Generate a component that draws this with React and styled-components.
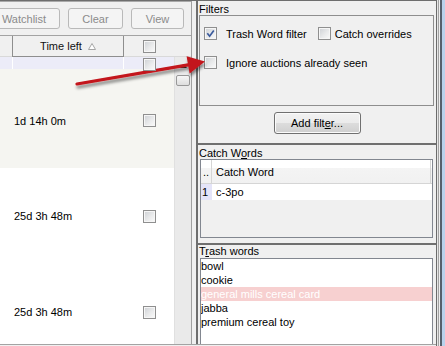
import React from "react";
import styled, { createGlobalStyle } from "styled-components";

const GlobalStyle = createGlobalStyle`
  html, body { margin: 0; padding: 0; background: #f0f0f0; overflow: hidden; }
  body { font-family: "Liberation Sans", Arial, sans-serif; font-size: 11px; color: #000; }
  * { box-sizing: border-box; }
`;

const Window = styled.div`
  position: relative;
  width: 445px;
  height: 346px;
  display: flex;
  align-items: flex-start;
  background: #f0f0f0;
  overflow: hidden;
`;

const Frame = styled.div`
  width: 436px;
  height: 345px;
  flex-shrink: 0;
  display: flex;
  flex-direction: column;
  border-top: 1px solid #6e6e6e;
  border-bottom: 1px solid #a3a3a3;
`;

const Main = styled.div`
  flex: 1;
  min-height: 0;
  display: flex;
`;

const WindowEdge = styled.div`
  width: 9px;
  height: 346px;
  flex-shrink: 0;
  background: linear-gradient(
    to right,
    #6b6b6b 0 1px,
    #e6e6e6 1px 2px,
    #a2a2a2 2px 3px,
    #eeeeee 3px 4px,
    #56606c 4px 6px,
    #b9d2ec 6px 9px
  );
`;

/* ---------- left pane ---------- */

const LeftPane = styled.div`
  width: 192px;
  flex-shrink: 0;
  display: flex;
  flex-direction: column;
  border-top: 1px solid #a9a9a9;
  border-right: 1px solid #a0a0a0;
  overflow: hidden;
`;

const Toolbar = styled.div`
  height: 34px;
  flex-shrink: 0;
  display: flex;
  justify-content: flex-end;
  align-items: flex-start;
  gap: 8px;
  padding: 6px 7px 0 0;
  border-bottom: 1px solid #a3a3a3;
  background: #f0f0f0;
`;

const ToolButton = styled.div`
  width: ${(p) => p.$w}px;
  height: 21px;
  flex-shrink: 0;
  display: flex;
  align-items: center;
  justify-content: center;
  border: 1px solid #b9b9b9;
  border-radius: 3px;
  background: #f4f4f4;
  color: #8b8b8b;
`;

const HeadRow = styled.div`
  height: 21px;
  flex-shrink: 0;
  display: flex;
  background: #f0f0f0;
`;

const HeadCell = styled.div`
  width: ${(p) => (p.$w ? `${p.$w}px` : "auto")};
  flex: ${(p) => (p.$w ? "0 0 auto" : "1")};
  display: flex;
  align-items: center;
  justify-content: center;
  gap: 6px;
  border-bottom: 1px solid ${(p) => (p.$sorted ? "#8e8e8e" : "#d9d9d9")};
  ${(p) =>
    p.$sorted &&
    "border-left: 1px solid #8e8e8e; border-right: 1px solid #8e8e8e; color: #111;"}
`;

const GridBody = styled.div`
  flex: 1;
  min-height: 0;
  display: flex;
`;

const RowsArea = styled.div`
  width: 174px;
  flex-shrink: 0;
  display: flex;
  flex-direction: column;
  background: #fff;
`;

const NewRow = styled.div`
  height: 12px;
  flex-shrink: 0;
  display: flex;
  background: #ececf8;
`;

const NewCell = styled.div`
  width: ${(p) => p.$w}px;
  flex-shrink: 0;
  display: flex;
  justify-content: center;
  padding-top: 1px;
  ${(p) => p.$sep && "border-right: 1px solid #ffffff;"}
`;

const DataRow = styled.div`
  height: ${(p) => p.$h}px;
  flex-shrink: 0;
  display: flex;
  align-items: center;
  padding-top: ${(p) => p.$pt || 0}px;
  background: ${(p) => p.$bg};
`;

const TextCell = styled.div`
  width: 124px;
  flex-shrink: 0;
  padding-left: 14px;
`;

const CheckCell = styled.div`
  width: 50px;
  flex-shrink: 0;
  display: flex;
  justify-content: center;
`;

const ScrollBar = styled.div`
  flex: 1;
  display: flex;
  flex-direction: column;
  background: #eaeaea;
  border-left: 1px solid #e0e0e0;
`;

const ScrollArrow = styled.div`
  height: 17px;
  display: flex;
  align-items: center;
  justify-content: center;
`;

const Thumb = styled.div`
  height: 11px;
  margin: 1px 1px 0 1px;
  border: 1px solid #989898;
  border-radius: 2px;
  background: linear-gradient(#f6f6f6, #dedede);
`;

/* ---------- splitter & right pane ---------- */

const Splitter = styled.div`
  width: 4px;
  flex-shrink: 0;
  background: #f0f0f0;
`;

const RightPane = styled.div`
  flex: 1;
  min-width: 0;
  display: flex;
  flex-direction: column;
  border-left: 2px solid #6e6e6e;
  background: #f0f0f0;
`;

const GroupLabel = styled.div`
  height: ${(p) => p.$h || 14}px;
  line-height: ${(p) => p.$h || 14}px;
  padding-top: ${(p) => p.$pt || 0}px;
  padding-left: 1px;
  flex-shrink: 0;
  white-space: nowrap;
`;

const FilterBox = styled.div`
  height: 91px;
  flex-shrink: 0;
  margin: 0 2px 0 1px;
  border: 1px solid #8e8e8e;
  display: flex;
  flex-direction: column;
  gap: 16px;
  padding: 11px 0 0 4px;
`;

const CheckRow = styled.div`
  height: 13px;
  display: flex;
  align-items: center;
  gap: 11px;
`;

const CheckItem = styled.label`
  display: flex;
  align-items: center;
  gap: ${(p) => p.$gap}px;
  white-space: nowrap;
`;

const Box = styled.span`
  width: 13px;
  height: 13px;
  flex-shrink: 0;
  display: inline-flex;
  align-items: center;
  justify-content: center;
  border: 1px solid #8f8f8f;
  background: linear-gradient(135deg, #cdd0d4 0%, #e9eaeb 55%, #fbfbfb 100%);
  box-shadow: inset 0 0 0 1px #f6f6f6;
  ${(p) => p.$raised && "position: relative; z-index: 1;"}
`;

const ButtonRow = styled.div`
  height: 37px;
  flex-shrink: 0;
  display: flex;
  justify-content: center;
  padding-top: 6px;
`;

const PushButton = styled.div`
  width: 87px;
  height: 22px;
  display: flex;
  align-items: center;
  justify-content: center;
  border: 1px solid #707070;
  border-radius: 3px;
  background: linear-gradient(#f2f2f2 0%, #ebebeb 50%, #dddddd 50%, #cfcfcf 100%);
  box-shadow: inset 0 0 0 1px #fbfbfb;
`;

const Separator = styled.div`
  height: 2px;
  flex-shrink: 0;
  margin-top: ${(p) => p.$mt || 0}px;
  background: #6f6f6f;
`;

const TableBox = styled.div`
  height: 79px;
  flex-shrink: 0;
  margin: 0 3px 0 2px;
  border: 1px solid #828790;
  display: flex;
  flex-direction: column;
`;

const TableHead = styled.div`
  height: 24px;
  flex-shrink: 0;
  display: flex;
  border-bottom: 1px solid #d5d5d5;
  background: linear-gradient(#ffffff 0, #ffffff 8px, #f4f4f4 8px, #f1f1f1 100%);
`;

const TH = styled.div`
  width: ${(p) => p.$w}px;
  flex-shrink: 0;
  display: flex;
  align-items: center;
  justify-content: ${(p) => (p.$center ? "center" : "flex-start")};
  padding-left: ${(p) => p.$pl || 0}px;
  border-right: 1px solid #d5d5d5;
  white-space: nowrap;
`;

const TableRow = styled.div`
  height: 16px;
  flex-shrink: 0;
  display: flex;
  background: #fff;
`;

const RowNum = styled.div`
  width: 11px;
  flex-shrink: 0;
  padding-left: 1px;
  display: flex;
  align-items: center;
  background: #e4e4f8;
`;

const TD = styled.div`
  flex: 1;
  display: flex;
  align-items: center;
  padding-left: 4px;
`;

const ListBox = styled.div`
  flex: 1;
  min-height: 0;
  margin: 0 3px 0 2px;
  border: 1px solid #828790;
  border-bottom: none;
  background: #fff;
  display: flex;
  flex-direction: column;
  overflow: hidden;
`;

const ListItem = styled.div`
  height: 14px;
  line-height: 14px;
  flex-shrink: 0;
  white-space: nowrap;
  background: ${(p) => (p.$selected ? "#f7d0d0" : "transparent")};
  color: ${(p) => (p.$selected ? "#ffffff" : "#000")};
`;

const ArrowLayer = styled.svg`
  position: absolute;
  left: 0;
  top: 0;
  pointer-events: none;
`;

/* ---------- pieces ---------- */

const CheckMark = () => (
  <svg width="9" height="9" viewBox="0 0 9 9">
    <path d="M1.3 4.3 L3.6 7.2 L7.8 1.4" fill="none" stroke="#3a5a9c" strokeWidth="1.7" />
  </svg>
);

const Checkbox = ({ checked, raised }) => (
  <Box $raised={raised}>{checked && <CheckMark />}</Box>
);

const SortTriangle = () => (
  <svg width="8" height="7" viewBox="0 0 8 7">
    <polygon points="0.5,6.5 4,0.5 7.5,6.5" fill="#ffffff" stroke="#a6a6a6" strokeWidth="1" />
  </svg>
);

const UpTriangle = () => (
  <svg width="7" height="4" viewBox="0 0 7 4">
    <polygon points="0,4 3.5,0 7,4" fill="#2a2a2a" />
  </svg>
);

const rows = [
  { h: 99, pt: 4, bg: "#f5f5f1", text: "1d 14h 0m" },
  { h: 96, pt: 0, bg: "#ffffff", text: "25d 3h 48m" },
  { h: 96, pt: 0, bg: "#ffffff", text: "25d 3h 48m" },
];

const trashWords = ["bowl", "cookie", "general mills cereal card", "jabba", "premium cereal toy"];

export default function App() {
  return (
    <>
      <GlobalStyle />
      <Window>
        <Frame>
          <Main>
            <LeftPane>
              <Toolbar>
                <ToolButton $w={72}>Watchlist</ToolButton>
                <ToolButton $w={55}>Clear</ToolButton>
                <ToolButton $w={53}>View</ToolButton>
              </Toolbar>
              <HeadRow>
                <HeadCell $w={12} />
                <HeadCell $w={112} $sorted>
                  <span>Time left</span>
                  <SortTriangle />
                </HeadCell>
                <HeadCell $w={50}>
                  <Checkbox />
                </HeadCell>
                <HeadCell />
              </HeadRow>
              <GridBody>
                <RowsArea>
                  <NewRow>
                    <NewCell $w={13} $sep />
                    <NewCell $w={111} $sep />
                    <NewCell $w={50}>
                      <Checkbox raised />
                    </NewCell>
                  </NewRow>
                  {rows.map((r, i) => (
                    <DataRow key={i} $h={r.h} $pt={r.pt} $bg={r.bg}>
                      <TextCell>{r.text}</TextCell>
                      <CheckCell>
                        <Checkbox />
                      </CheckCell>
                    </DataRow>
                  ))}
                </RowsArea>
                <ScrollBar>
                  <ScrollArrow>
                    <UpTriangle />
                  </ScrollArrow>
                  <Thumb />
                </ScrollBar>
              </GridBody>
            </LeftPane>

            <Splitter />

            <RightPane>
              <GroupLabel $pt={1}>Filters</GroupLabel>
              <FilterBox>
                <CheckRow>
                  <CheckItem $gap={9}>
                    <Checkbox checked />
                    <span>Trash Word filter</span>
                  </CheckItem>
                  <CheckItem $gap={4}>
                    <Checkbox />
                    <span>Catch overrides</span>
                  </CheckItem>
                </CheckRow>
                <CheckRow>
                  <CheckItem $gap={9}>
                    <Checkbox />
                    <span>Ignore auctions already seen</span>
                  </CheckItem>
                </CheckRow>
              </FilterBox>
              <ButtonRow>
                <PushButton>
                  <span>
                    Add filt<u>e</u>r...
                  </span>
                </PushButton>
              </ButtonRow>
              <Separator />
              <GroupLabel $pt={1}>
                Catch W<u>o</u>rds
              </GroupLabel>
              <TableBox>
                <TableHead>
                  <TH $w={11} $center>
                    ..
                  </TH>
                  <TH $w={219} $pl={4}>
                    Catch Word
                  </TH>
                </TableHead>
                <TableRow>
                  <RowNum>1</RowNum>
                  <TD>c-3po</TD>
                </TableRow>
              </TableBox>
              <Separator $mt={5} />
              <GroupLabel $h={13}>
                T<u>r</u>ash words
              </GroupLabel>
              <ListBox>
                {trashWords.map((w) => (
                  <ListItem key={w} $selected={w === "general mills cereal card"}>
                    {w}
                  </ListItem>
                ))}
              </ListBox>
            </RightPane>
          </Main>
        </Frame>
        <WindowEdge />

        <ArrowLayer width="445" height="346" viewBox="0 0 445 346">
          <defs>
            <filter id="arrowShadow" x="-20%" y="-50%" width="140%" height="200%">
              <feDropShadow dx="1" dy="3" stdDeviation="1.6" floodColor="#000" floodOpacity="0.45" />
            </filter>
          </defs>
          <g filter="url(#arrowShadow)">
            <line x1="77" y1="84" x2="191" y2="64.3" stroke="#c3141b" strokeWidth="3.2" strokeLinecap="round" />
            <polygon points="205,61.5 186.6,56.2 189.6,73.6" fill="#c3141b" />
          </g>
        </ArrowLayer>
      </Window>
    </>
  );
}
